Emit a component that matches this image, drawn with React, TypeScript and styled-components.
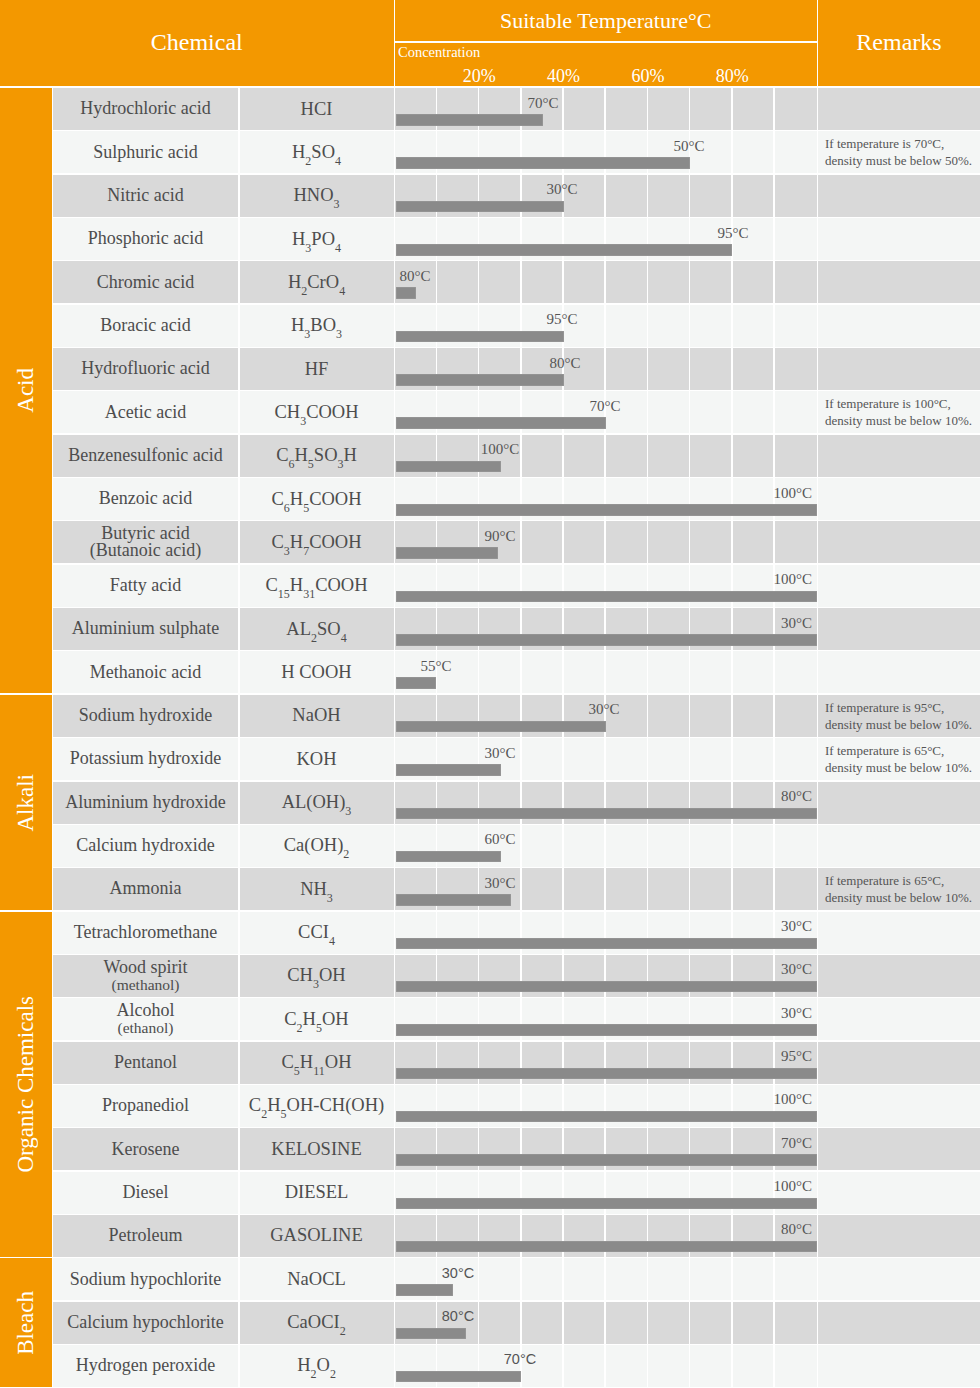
import React from 'react';
import styled, { createGlobalStyle } from 'styled-components';

const ORANGE = '#f39800';
const GRAY = '#d9d9d9';
const LIGHT = '#f4f6f5';
const TEXT = '#4d4d4d';
const SERIF = '"Liberation Serif", "Times New Roman", serif';
const SANS = '"Liberation Sans", Arial, sans-serif';

const GlobalStyle = createGlobalStyle`
  html, body { margin: 0; padding: 0; background: #ffffff; }
  body { font-family: ${SERIF}; }
`;

const GRID_LINES = (() => {
  const stops: string[] = [];
  for (let k = 1; k <= 9; k++) {
    const p = k * 10;
    stops.push(`transparent calc(${p}% - 1.5px)`, `#ffffff calc(${p}% - 1.5px)`, `#ffffff ${p}%`, `transparent ${p}%`);
  }
  return `linear-gradient(90deg, transparent 0, ${stops.join(', ')}, transparent 100%)`;
})();

const Page = styled.div`
  width: 980px;
  display: flex;
  flex-direction: column;
  gap: 2px;
  background: #ffffff;
`;

const Header = styled.header`
  display: grid;
  grid-template-columns: 393.5px 421.5px 1fr;
  column-gap: 1.5px;
  height: 86px;
`;

const HeadCell = styled.div`
  background: ${ORANGE};
  color: #ffffff;
  display: flex;
  align-items: center;
  justify-content: center;
  font-size: 24px;
  padding-bottom: 2px;
`;

const TempHead = styled.div`
  display: flex;
  flex-direction: column;
  gap: 1.5px;
`;

const TempTitle = styled.div`
  height: 41px;
  background: ${ORANGE};
  color: #ffffff;
  display: flex;
  align-items: center;
  justify-content: center;
  font-size: 22px;
`;

const TempScale = styled.div`
  flex: 1;
  background: ${ORANGE};
  color: #ffffff;
  display: flex;
  flex-direction: column;
  padding-top: 1px;
`;

const ConcLabel = styled.div`
  font-size: 14.5px;
  line-height: 16px;
  padding-left: 3px;
`;

const ScaleRow = styled.div`
  display: grid;
  grid-template-columns: 10% repeat(4, 20%) 10%;
  font-size: 18px;
  line-height: 20px;
  margin-top: 6px;
`;

const ScaleTick = styled.span`
  text-align: center;
`;

const Body = styled.div`
  display: flex;
  flex-direction: column;
  gap: 1.35px;
`;

const Group = styled.section`
  display: grid;
  grid-template-columns: 51.5px 1fr;
  column-gap: 1.5px;
`;

const Category = styled.div`
  background: ${ORANGE};
  color: #ffffff;
  display: flex;
  align-items: center;
  justify-content: center;
`;

const CategoryText = styled.span`
  writing-mode: vertical-rl;
  transform: rotate(180deg);
  font-size: 23px;
  white-space: nowrap;
`;

const Rows = styled.div`
  display: flex;
  flex-direction: column;
  gap: 1.35px;
`;

const Row = styled.div`
  display: grid;
  grid-template-columns: 185px 154px 421.5px 1fr;
  column-gap: 1.5px;
  height: 42px;
`;

const Cell = styled.div<{ $shade: boolean }>`
  background-color: ${(p) => (p.$shade ? GRAY : LIGHT)};
  color: ${TEXT};
`;

const NameCell = styled(Cell)`
  display: flex;
  flex-direction: column;
  align-items: center;
  justify-content: center;
  text-align: center;
  font-size: 18px;
  line-height: 18px;
`;

const NameLine = styled.span<{ $small?: boolean }>`
  font-size: ${(p) => (p.$small ? '15.5px' : '18px')};
  line-height: ${(p) => (p.$small ? '16px' : '17.5px')};
  white-space: nowrap;
`;

const FormulaCell = styled(Cell)`
  display: flex;
  align-items: center;
  justify-content: center;
  font-size: 18.5px;
  white-space: nowrap;
`;

const Sub = styled.span`
  font-size: 12px;
  vertical-align: -6.5px;
  line-height: 0;
`;

const ChartCell = styled(Cell)`
  position: relative;
  display: flex;
  align-items: flex-end;
  padding: 0 0 4.5px 0.5px;
  background-image: ${GRID_LINES};
`;

const Bar = styled.div`
  height: 11.5px;
  background: #8a8a8a;
  box-shadow: inset 0 0 0 0.6px #9c9c9c;
`;

const BarLabel = styled.span<{ $sans?: boolean; $end?: boolean }>`
  position: absolute;
  top: 6.5px;
  font-family: ${(p) => (p.$sans ? SANS : SERIF)};
  font-size: ${(p) => (p.$sans ? '14.5px' : '15px')};
  line-height: 16px;
  color: #555555;
  white-space: nowrap;
  transform: ${(p) => (p.$end ? 'none' : 'translateX(-50%)')};
`;

const RemarkCell = styled(Cell)`
  display: flex;
  flex-direction: column;
  justify-content: center;
  padding-left: 7px;
  font-size: 13px;
  line-height: 17px;
  color: #555555;
  white-space: nowrap;
`;

type Item = {
  name: string[];
  small?: boolean;
  formula: string;
  bar: number | 'full';
  label: string;
  at: number | 'end';
  remark?: [string, string];
};

type GroupData = { title: string; items: Item[]; sans?: boolean };

const rem = (t: string, d: string): [string, string] => [`If temperature is ${t}°C,`, `density must be below ${d}%.`];

const GROUPS: GroupData[] = [
  {
    title: 'Acid',
    items: [
      { name: ['Hydrochloric acid'], formula: 'HCI', bar: 147, label: '70°C', at: 148 },
      { name: ['Sulphuric acid'], formula: 'H2SO4', bar: 294, label: '50°C', at: 294, remark: rem('70', '50') },
      { name: ['Nitric acid'], formula: 'HNO3', bar: 168, label: '30°C', at: 167 },
      { name: ['Phosphoric acid'], formula: 'H3PO4', bar: 336, label: '95°C', at: 338 },
      { name: ['Chromic acid'], formula: 'H2CrO4', bar: 20, label: '80°C', at: 20 },
      { name: ['Boracic acid'], formula: 'H3BO3', bar: 168, label: '95°C', at: 167 },
      { name: ['Hydrofluoric acid'], formula: 'HF', bar: 168, label: '80°C', at: 170 },
      { name: ['Acetic acid'], formula: 'CH3COOH', bar: 210, label: '70°C', at: 210, remark: rem('100', '10') },
      { name: ['Benzenesulfonic acid'], formula: 'C6H5SO3H', bar: 105, label: '100°C', at: 105 },
      { name: ['Benzoic acid'], formula: 'C6H5COOH', bar: 'full', label: '100°C', at: 'end' },
      { name: ['Butyric acid', '(Butanoic acid)'], formula: 'C3H7COOH', bar: 102, label: '90°C', at: 105 },
      { name: ['Fatty acid'], formula: 'C15H31COOH', bar: 'full', label: '100°C', at: 'end' },
      { name: ['Aluminium sulphate'], formula: 'AL2SO4', bar: 'full', label: '30°C', at: 'end' },
      { name: ['Methanoic acid'], formula: 'H COOH', bar: 40, label: '55°C', at: 41 },
    ],
  },
  {
    title: 'Alkali',
    items: [
      { name: ['Sodium hydroxide'], formula: 'NaOH', bar: 210, label: '30°C', at: 209, remark: rem('95', '10') },
      { name: ['Potassium hydroxide'], formula: 'KOH', bar: 105, label: '30°C', at: 105, remark: rem('65', '10') },
      { name: ['Aluminium hydroxide'], formula: 'AL(OH)3', bar: 'full', label: '80°C', at: 'end' },
      { name: ['Calcium hydroxide'], formula: 'Ca(OH)2', bar: 105, label: '60°C', at: 105 },
      { name: ['Ammonia'], formula: 'NH3', bar: 115, label: '30°C', at: 105, remark: rem('65', '10') },
    ],
  },
  {
    title: 'Organic Chemicals',
    items: [
      { name: ['Tetrachloromethane'], formula: 'CCI4', bar: 'full', label: '30°C', at: 'end' },
      { name: ['Wood spirit', '(methanol)'], small: true, formula: 'CH3OH', bar: 'full', label: '30°C', at: 'end' },
      { name: ['Alcohol', '(ethanol)'], small: true, formula: 'C2H5OH', bar: 'full', label: '30°C', at: 'end' },
      { name: ['Pentanol'], formula: 'C5H11OH', bar: 'full', label: '95°C', at: 'end' },
      { name: ['Propanediol'], formula: 'C2H5OH-CH(OH)', bar: 'full', label: '100°C', at: 'end' },
      { name: ['Kerosene'], formula: 'KELOSINE', bar: 'full', label: '70°C', at: 'end' },
      { name: ['Diesel'], formula: 'DIESEL', bar: 'full', label: '100°C', at: 'end' },
      { name: ['Petroleum'], formula: 'GASOLINE', bar: 'full', label: '80°C', at: 'end' },
    ],
  },
  {
    title: 'Bleach',
    sans: true,
    items: [
      { name: ['Sodium hypochlorite'], formula: 'NaOCL', bar: 57, label: '30°C', at: 63 },
      { name: ['Calcium hypochlorite'], formula: 'CaOCI2', bar: 70, label: '80°C', at: 63 },
      { name: ['Hydrogen peroxide'], formula: 'H2O2', bar: 125, label: '70°C', at: 125 },
    ],
  },
];

const Formula: React.FC<{ text: string }> = ({ text }) => (
  <>
    {text.split(/(\d+)/).map((part, i) =>
      /^\d+$/.test(part) ? <Sub key={i}>{part}</Sub> : <React.Fragment key={i}>{part}</React.Fragment>
    )}
  </>
);

export default function App() {
  let index = 0;
  return (
    <>
      <GlobalStyle />
      <Page>
        <Header>
          <HeadCell>Chemical</HeadCell>
          <TempHead>
            <TempTitle>Suitable Temperature°C</TempTitle>
            <TempScale>
              <ConcLabel>Concentration</ConcLabel>
              <ScaleRow>
                <span />
                <ScaleTick>20%</ScaleTick>
                <ScaleTick>40%</ScaleTick>
                <ScaleTick>60%</ScaleTick>
                <ScaleTick>80%</ScaleTick>
                <span />
              </ScaleRow>
            </TempScale>
          </TempHead>
          <HeadCell>Remarks</HeadCell>
        </Header>
        <Body>
          {GROUPS.map((g) => (
            <Group key={g.title}>
              <Category>
                <CategoryText>{g.title}</CategoryText>
              </Category>
              <Rows>
                {g.items.map((it) => {
                  const shade = index % 2 === 0;
                  index += 1;
                  return (
                    <Row key={it.name[0]}>
                      <NameCell $shade={shade}>
                        {it.name.map((n, i) => (
                          <NameLine key={n} $small={it.small && i === 1}>
                            {n}
                          </NameLine>
                        ))}
                      </NameCell>
                      <FormulaCell $shade={shade}>
                        <span>
                          <Formula text={it.formula} />
                        </span>
                      </FormulaCell>
                      <ChartCell $shade={shade}>
                        <Bar style={{ width: it.bar === 'full' ? '100%' : `${it.bar}px` }} />
                        <BarLabel
                          $sans={g.sans}
                          $end={it.at === 'end'}
                          style={it.at === 'end' ? { right: '4.5px' } : { left: `${it.at}px` }}
                        >
                          {it.label}
                        </BarLabel>
                      </ChartCell>
                      <RemarkCell $shade={shade}>
                        {it.remark && (
                          <>
                            <span>{it.remark[0]}</span>
                            <span>{it.remark[1]}</span>
                          </>
                        )}
                      </RemarkCell>
                    </Row>
                  );
                })}
              </Rows>
            </Group>
          ))}
        </Body>
      </Page>
    </>
  );
}
